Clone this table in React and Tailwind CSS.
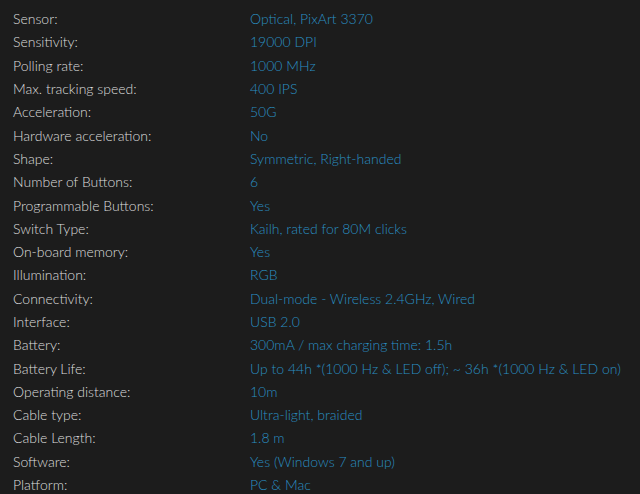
import React from 'react';

const specs = [
  ['Sensor:', 'Optical, PixArt 3370'],
  ['Sensitivity:', '19000 DPI'],
  ['Polling rate:', '1000 MHz'],
  ['Max. tracking speed:', '400 IPS'],
  ['Acceleration:', '50G'],
  ['Hardware acceleration:', 'No'],
  ['Shape:', 'Symmetric, Right-handed'],
  ['Number of Buttons:', '6'],
  ['Programmable Buttons:', 'Yes'],
  ['Switch Type:', 'Kailh, rated for 80M clicks'],
  ['On-board memory:', 'Yes'],
  ['Illumination:', 'RGB'],
  ['Connectivity:', 'Dual-mode - Wireless 2.4GHz, Wired'],
  ['Interface:', 'USB 2.0'],
  ['Battery:', '300mA / max charging time: 1.5h'],
  ['Battery Life:', 'Up to 44h *(1000 Hz & LED off); ~ 36h *(1000 Hz & LED on)'],
  ['Operating distance:', '10m'],
  ['Cable type:', 'Ultra-light, braided'],
  ['Cable Length:', '1.8 m'],
  ['Software:', 'Yes (Windows 7 and up)'],
  ['Platform:', 'PC & Mac'],
];

const App = () => {
  return (
    <div className="w-[640px] h-[494px] bg-[#1c1c1c] overflow-hidden pt-[7px] pl-[13px] font-['Lato',sans-serif] text-[14px] font-light">
      {specs.map(([label, value]) => (
        <div key={label} className="flex h-[23.3px] items-center">
          <div className="w-[237px] shrink-0 text-[#dcdcdc]">{label}</div>
          <div className="text-[#2a8fc2] whitespace-nowrap">{value}</div>
        </div>
      ))}
    </div>
  );
};

export default App;
